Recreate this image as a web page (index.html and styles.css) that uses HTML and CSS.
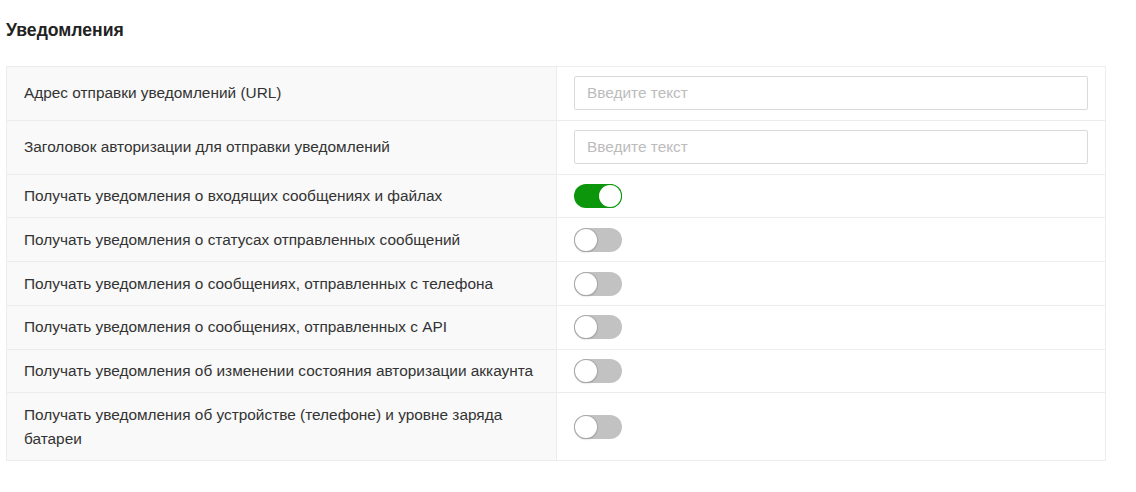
FILE: index.html
```html
<!DOCTYPE html>
<html lang="ru">
<head>
<meta charset="utf-8">
<link rel="stylesheet" href="styles.css">
</head>
<body>
<div class="page">
  <h2 class="title">Уведомления</h2>
  <table class="settings">
    <tr>
      <td class="label">Адрес отправки уведомлений (URL)</td>
      <td class="value"><input class="field" type="text" placeholder="Введите текст"></td>
    </tr>
    <tr>
      <td class="label">Заголовок авторизации для отправки уведомлений</td>
      <td class="value"><input class="field" type="text" placeholder="Введите текст"></td>
    </tr>
    <tr>
      <td class="label">Получать уведомления о входящих сообщениях и файлах</td>
      <td class="value"><span class="switch on"><span class="knob"></span></span></td>
    </tr>
    <tr>
      <td class="label">Получать уведомления о статусах отправленных сообщений</td>
      <td class="value"><span class="switch"><span class="knob"></span></span></td>
    </tr>
    <tr>
      <td class="label">Получать уведомления о сообщениях, отправленных с телефона</td>
      <td class="value"><span class="switch"><span class="knob"></span></span></td>
    </tr>
    <tr>
      <td class="label">Получать уведомления о сообщениях, отправленных с API</td>
      <td class="value"><span class="switch"><span class="knob"></span></span></td>
    </tr>
    <tr>
      <td class="label">Получать уведомления об изменении состояния авторизации аккаунта</td>
      <td class="value"><span class="switch"><span class="knob"></span></span></td>
    </tr>
    <tr>
      <td class="label">Получать уведомления об устройстве (телефоне) и уровне заряда батареи</td>
      <td class="value"><span class="switch"><span class="knob"></span></span></td>
    </tr>
  </table>
</div>
</body>
</html>
```

FILE: styles.css
```css
html, body {
  margin: 0;
  padding: 0;
  background: #fff;
}
body {
  font-family: "Liberation Sans", Arial, sans-serif;
  color: #333;
}
.page {
  padding: 0 6px;
}
.title {
  margin: 0;
  padding-top: 19px;
  height: 66px;
  box-sizing: border-box;
  font-size: 17.6px;
  font-weight: 700;
  line-height: 22px;
  color: #222;
}
.settings {
  width: 1100px;
  border-collapse: collapse;
  table-layout: fixed;
}
.settings td {
  border: 1px solid #ececec;
  padding: 9.4px 17px;
  font-size: 15.4px;
  line-height: 24px;
  vertical-align: middle;
}
.settings td.label {
  width: 515px;
  background: #f9f9f9;
  color: #333;
}
.settings td.value {
  background: #fff;
}
.field {
  display: block;
  box-sizing: border-box;
  width: 100%;
  height: 34px;
  margin: 0;
  padding: 0 12px;
  border: 1px solid #dadada;
  border-radius: 2px;
  font-family: inherit;
  font-size: 15.4px;
  color: #333;
  background: #fff;
  outline: none;
}
.field::placeholder {
  color: #bcbcbc;
}
.switch {
  position: relative;
  display: block;
  width: 48px;
  height: 24px;
  border-radius: 12px;
  background: #c2c2c2;
}
.switch .knob {
  position: absolute;
  top: 1px;
  left: 1px;
  width: 22px;
  height: 22px;
  border-radius: 50%;
  background: #fff;
  box-shadow: 0 0 0 1px #a9a9a9, 0 1px 2px rgba(0, 0, 0, 0.3);
}
.switch.on {
  background: #0b960b;
}
.switch.on .knob {
  left: 25px;
  box-shadow: 0 0 0 1px #0b960b;
}
```
